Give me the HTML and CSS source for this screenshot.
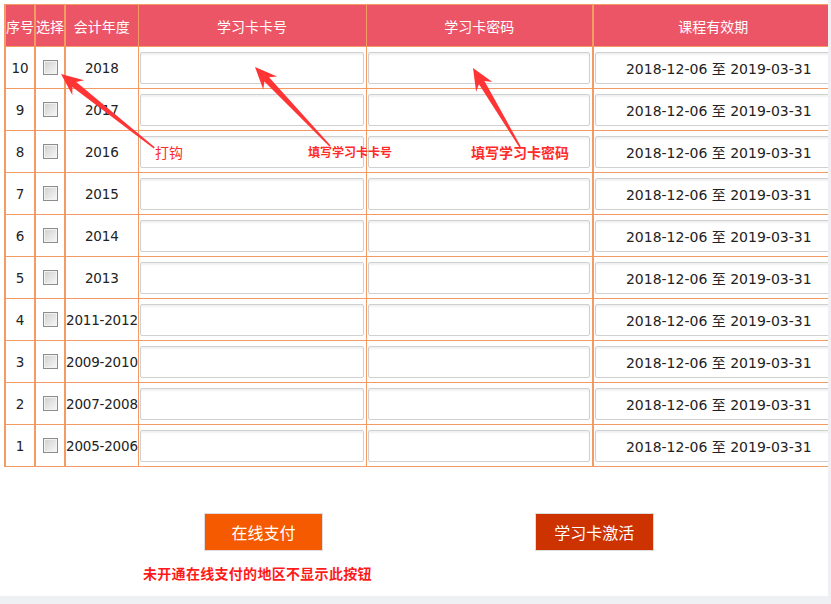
FILE: index.html
```html
<!DOCTYPE html>
<html lang="zh-CN">
  <head>
    <meta charset="UTF-8" />
    <meta name="viewport" content="width=device-width, initial-scale=1.0" />
    <title>学习卡激活</title>
    <link rel="stylesheet" href="styles.css">
  </head>
  <body>
    <div class="page">
      <table class="card-table">
        <colgroup>
          <col class="c-no" />
          <col class="c-check" />
          <col class="c-year" />
          <col class="c-card" />
          <col class="c-pwd" />
          <col class="c-date" />
        </colgroup>
        <thead>
          <tr>
            <th>序号</th>
            <th>选择</th>
            <th>会计年度</th>
            <th>学习卡卡号</th>
            <th>学习卡密码</th>
            <th>课程有效期</th>
          </tr>
        </thead>
        <tbody>
          <tr>
            <td class="num">10</td>
            <td><input type="checkbox" class="check" /></td>
            <td class="num">2018</td>
            <td class="field"><input type="text" class="text-input" /></td>
            <td class="field"><input type="text" class="text-input" /></td>
            <td class="field"><input type="text" class="text-input date" value="2018-12-06 至 2019-03-31" readonly /></td>
          </tr>
          <tr>
            <td class="num">9</td>
            <td><input type="checkbox" class="check" /></td>
            <td class="num">2017</td>
            <td class="field"><input type="text" class="text-input" /></td>
            <td class="field"><input type="text" class="text-input" /></td>
            <td class="field"><input type="text" class="text-input date" value="2018-12-06 至 2019-03-31" readonly /></td>
          </tr>
          <tr>
            <td class="num">8</td>
            <td><input type="checkbox" class="check" /></td>
            <td class="num">2016</td>
            <td class="field"><input type="text" class="text-input" /></td>
            <td class="field"><input type="text" class="text-input" /></td>
            <td class="field"><input type="text" class="text-input date" value="2018-12-06 至 2019-03-31" readonly /></td>
          </tr>
          <tr>
            <td class="num">7</td>
            <td><input type="checkbox" class="check" /></td>
            <td class="num">2015</td>
            <td class="field"><input type="text" class="text-input" /></td>
            <td class="field"><input type="text" class="text-input" /></td>
            <td class="field"><input type="text" class="text-input date" value="2018-12-06 至 2019-03-31" readonly /></td>
          </tr>
          <tr>
            <td class="num">6</td>
            <td><input type="checkbox" class="check" /></td>
            <td class="num">2014</td>
            <td class="field"><input type="text" class="text-input" /></td>
            <td class="field"><input type="text" class="text-input" /></td>
            <td class="field"><input type="text" class="text-input date" value="2018-12-06 至 2019-03-31" readonly /></td>
          </tr>
          <tr>
            <td class="num">5</td>
            <td><input type="checkbox" class="check" /></td>
            <td class="num">2013</td>
            <td class="field"><input type="text" class="text-input" /></td>
            <td class="field"><input type="text" class="text-input" /></td>
            <td class="field"><input type="text" class="text-input date" value="2018-12-06 至 2019-03-31" readonly /></td>
          </tr>
          <tr>
            <td class="num">4</td>
            <td><input type="checkbox" class="check" /></td>
            <td class="num">2011-2012</td>
            <td class="field"><input type="text" class="text-input" /></td>
            <td class="field"><input type="text" class="text-input" /></td>
            <td class="field"><input type="text" class="text-input date" value="2018-12-06 至 2019-03-31" readonly /></td>
          </tr>
          <tr>
            <td class="num">3</td>
            <td><input type="checkbox" class="check" /></td>
            <td class="num">2009-2010</td>
            <td class="field"><input type="text" class="text-input" /></td>
            <td class="field"><input type="text" class="text-input" /></td>
            <td class="field"><input type="text" class="text-input date" value="2018-12-06 至 2019-03-31" readonly /></td>
          </tr>
          <tr>
            <td class="num">2</td>
            <td><input type="checkbox" class="check" /></td>
            <td class="num">2007-2008</td>
            <td class="field"><input type="text" class="text-input" /></td>
            <td class="field"><input type="text" class="text-input" /></td>
            <td class="field"><input type="text" class="text-input date" value="2018-12-06 至 2019-03-31" readonly /></td>
          </tr>
          <tr>
            <td class="num">1</td>
            <td><input type="checkbox" class="check" /></td>
            <td class="num">2005-2006</td>
            <td class="field"><input type="text" class="text-input" /></td>
            <td class="field"><input type="text" class="text-input" /></td>
            <td class="field"><input type="text" class="text-input date" value="2018-12-06 至 2019-03-31" readonly /></td>
          </tr>
        </tbody>
      </table>

      <div class="actions">
        <div class="pay-box">
          <button class="btn btn-pay">在线支付</button>
          <p class="pay-note">未开通在线支付的地区不显示此按钮</p>
        </div>
        <button class="btn btn-activate">学习卡激活</button>
      </div>

      <!-- annotations drawn over the screenshot -->
      <svg class="arrows" width="828" height="596" viewBox="0 0 828 596">
        <polygon transform="translate(61 74) rotate(38.4)" points="0,0 22,-9.5 17,-3.2 119,-0.8 119,0.8 17,3.2 22,9.5" />
        <polygon transform="translate(255 67) rotate(46.5)" points="0,0 22,-9.5 17,-3.2 109,-0.8 109,0.8 17,3.2 22,9.5" />
        <polygon transform="translate(473 68) rotate(59.2)" points="0,0 22,-9.5 17,-3.2 92,-0.8 92,0.8 17,3.2 22,9.5" />
      </svg>
      <span class="mark mark-check">打钩</span>
      <span class="mark mark-card">填写学习卡卡号</span>
      <span class="mark mark-pwd">填写学习卡密码</span>
    </div>
  </body>
</html>
```

FILE: styles.css
```css
body {
  margin: 0;
  background-color: #eff0f4;
  font-family: "DejaVu Sans", "Noto Sans CJK SC", sans-serif;
}

.page {
  position: relative;
  width: 828px;
  height: 596px;
  padding: 4px 0 0 4px;
  box-sizing: border-box;
  background-color: #ffffff;
  overflow: hidden;
}

.card-table {
  border-collapse: collapse;
  table-layout: fixed;
  width: 828px;
  border-left: 2px solid #f39b63;
}

.c-no { width: 30px; }
.c-check { width: 30px; }
.c-year { width: 73px; }
.c-card { width: 228px; }
.c-pwd { width: 227px; }
.c-date { width: 240px; }

.card-table th,
.card-table td {
  border: 1px solid #f39b63;
  padding: 0;
  text-align: center;
  vertical-align: middle;
  white-space: nowrap;
}

.card-table th:nth-child(1),
.card-table td:nth-child(1),
.card-table th:nth-child(2),
.card-table td:nth-child(2),
.card-table th:nth-child(5),
.card-table td:nth-child(5) {
  border-right-width: 2px;
}

.card-table th {
  height: 41px;
  background-color: #ec5566;
  color: #ffffff;
  font-family: "Noto Sans CJK SC", sans-serif;
  font-size: 14px;
  font-weight: normal;
  overflow: visible;
}

.card-table td {
  height: 41px;
}

.num {
  font-size: 13.5px;
  color: #222222;
  letter-spacing: -0.2px;
}

.check {
  appearance: none;
  -webkit-appearance: none;
  display: block;
  width: 15px;
  height: 15px;
  margin: 0 auto 0 7px;
  border: 1px solid #8d8d8d;
  box-sizing: border-box;
  box-shadow: inset 0 0 0 1px #f2f2f2;
  background: linear-gradient(135deg, #cfcfcf, #f8f8f8);
}

.field {
  text-align: left;
}

.text-input {
  display: block;
  box-sizing: border-box;
  width: calc(100% - 3px);
  height: 32px;
  margin-left: 1px;
  border: 1px solid #d0d0d0;
  border-radius: 2px;
  box-shadow: inset 0 2px 2px rgba(0, 0, 0, 0.06);
  background-color: #ffffff;
  outline: none;
  font-family: "DejaVu Sans", "Noto Sans CJK SC", sans-serif;
  font-size: 14px;
  color: #222222;
}

.text-input.date {
  text-align: center;
  padding-left: 14px;
}

.actions {
  display: flex;
  align-items: flex-start;
  margin-top: 46px;
  padding-left: 139px;
}

.pay-box {
  display: flex;
  flex-direction: column;
  align-items: flex-start;
}

.btn {
  width: 119px;
  height: 38px;
  border: 1px solid #dddddd;
  color: #ffffff;
  font-family: "Noto Sans CJK SC", sans-serif;
  font-size: 16px;
  cursor: pointer;
}

.btn-pay {
  margin-left: 61px;
  background-color: #f65a00;
}

.btn-activate {
  margin-left: 163px;
  background-color: #cc3300;
}

.pay-note {
  margin: 12px 0 0 0;
  color: #ff1a1a;
  font-family: "Noto Sans CJK SC", sans-serif;
  font-size: 14px;
  font-weight: bold;
  letter-spacing: 0.3px;
  white-space: nowrap;
}

.arrows {
  position: absolute;
  left: 0;
  top: 0;
  pointer-events: none;
}

.arrows polygon {
  fill: #ff3434;
}

.mark {
  position: absolute;
  color: #ff2a2a;
  font-family: "Noto Sans CJK SC", sans-serif;
  white-space: nowrap;
  line-height: 1;
}

.mark-check {
  left: 155px;
  top: 145px;
  font-size: 14px;
}

.mark-card {
  left: 308px;
  top: 146px;
  font-size: 12px;
  font-weight: bold;
}

.mark-pwd {
  left: 471px;
  top: 145px;
  font-size: 14px;
  font-weight: bold;
}
```
